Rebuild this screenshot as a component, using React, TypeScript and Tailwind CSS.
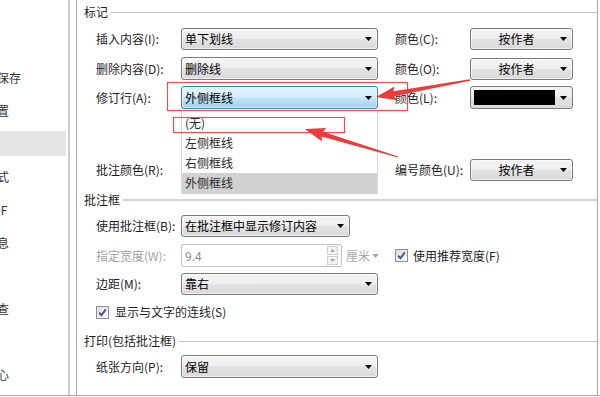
import React from "react";

const sideItems = [
  { label: "编辑" },
  { label: "常规与保存" },
  { label: "文件位置" },
  { label: "修订", active: true },
  { label: "中文版式" },
  { label: "输出PDF" },
  { label: "用户信息" },
  { label: "打印" },
  { label: "拼写检查" },
  { label: "安全性" },
  { label: "信任中心" },
];

function Caret({ color = "#000" }: { color?: string }) {
  return (
    <svg width="7" height="4" viewBox="0 0 7 4" className="shrink-0">
      <path d="M0 0H7L3.5 4Z" fill={color} />
    </svg>
  );
}

function Select({ text, className = "", active = false }: { text: string; className?: string; active?: boolean }) {
  return (
    <div
      className={`h-[22px] flex items-center rounded-[3px] border pl-[3px] pr-[5px] shadow-[inset_0_0_0_1px_rgba(255,255,255,0.6)] ${
        active
          ? "border-[#3c7fb1] bg-[linear-gradient(#e6f4fc,#d6eefb_45%,#bde3f7_55%,#a3d4f0)]"
          : "border-[#7a7a7a] bg-[linear-gradient(#f4f4f4,#eeeeee_50%,#e3e3e3_50%,#d9d9d9)]"
      } ${className}`}
    >
      <span className="flex-1 text-[12px] leading-none text-black whitespace-nowrap">{text}</span>
      <Caret />
    </div>
  );
}

function AuthorButton() {
  return (
    <div className="w-[103px] h-[22px] flex items-center rounded-[3px] border border-[#7a7a7a] bg-[linear-gradient(#f4f4f4,#eeeeee_50%,#e3e3e3_50%,#d9d9d9)] shadow-[inset_0_0_0_1px_rgba(255,255,255,0.6)] pr-[5px]">
      <span className="flex-1 text-center text-[12px] leading-none text-black pl-[2px]">按作者</span>
      <Caret />
    </div>
  );
}

function Check() {
  return (
    <div className="w-[13px] h-[13px] border border-[#8e8f8f] bg-[linear-gradient(135deg,#dcdcdc,#fafafa)] flex items-center justify-center shrink-0">
      <svg width="11" height="11" viewBox="0 0 11 11">
        <path d="M2.2 5.6L4.4 8.2L8.8 2.4" fill="none" stroke="#3d4f8c" strokeWidth="1.8" />
      </svg>
    </div>
  );
}

function Heading({ text, line = "h-px bg-[#c3c3c3]" }: { text: string; line?: string }) {
  return (
    <div className="h-[24px] flex items-center pl-[7px]">
      <span className="text-[12px] leading-none text-[#1e1e1e] whitespace-nowrap">{text}</span>
      <div className={`flex-1 ml-[3px] ${line}`} />
    </div>
  );
}

function Label({ children, className = "w-[85px]", muted = false }: { children: React.ReactNode; className?: string; muted?: boolean }) {
  return (
    <span className={`${className} shrink-0 text-[12px] leading-none whitespace-nowrap ${muted ? "text-[#a3a3a3]" : "text-[#1e1e1e]"}`}>
      {children}
    </span>
  );
}

export default function App() {
  return (
    <div className="relative w-[600px] h-[397px] bg-white overflow-hidden font-['Noto_Sans_CJK_SC',sans-serif]">
      <div className="flex h-[395px]">
        {/* sidebar, scrolled so only the tail of each label shows */}
        <div className="w-[68px] shrink-0 pt-[28px] overflow-hidden">
          {sideItems.map((item, i) => (
            <div key={i} className="h-[33px] flex items-center">
              {item.active ? (
                <div className="w-[66px] h-[25px] bg-[#e4e4e4]" />
              ) : (
                <span className="-ml-[39px] text-[12px] leading-none text-[#333] whitespace-nowrap">{item.label}</span>
              )}
            </div>
          ))}
        </div>
        <div className="w-[2px] shrink-0 bg-[#cdcdcd]" />
        <div className="w-[6px] shrink-0" />

        {/* options panel */}
        <div className="w-[522px] shrink-0 border-l border-r border-[#a9a9a9] flex flex-col">
          <Heading text="标记" />
          <div className="mt-[4px] h-[22px] flex items-center pl-[19px]">
            <Label>插入内容(I):</Label>
            <Select className="w-[197px]" text="单下划线" />
            <Label className="w-[75px] ml-[17px]">颜色(C):</Label>
            <AuthorButton />
          </div>
          <div className="mt-[7px] h-[23px] flex items-center pl-[19px]">
            <Label>删除内容(D):</Label>
            <Select className="w-[197px] h-[23px]" text="删除线" />
            <Label className="w-[75px] ml-[17px]">颜色(O):</Label>
            <AuthorButton />
          </div>
          <div className="mt-[6px] h-[23px] flex items-center pl-[19px]">
            <Label>修订行(A):</Label>
            <Select className="w-[197px] h-[23px]" text="外侧框线" active />
            <Label className="w-[75px] ml-[17px]">颜色(L):</Label>
            <div className="w-[103px] h-[23px] flex items-center rounded-[3px] border border-[#7a7a7a] bg-[linear-gradient(#f4f4f4,#eeeeee_50%,#e3e3e3_50%,#d9d9d9)] pl-[3px] pr-[5px] gap-[5px]">
              <div className="w-[81px] h-[15px] bg-black" />
              <Caret />
            </div>
          </div>
          <div className="mt-[50px] h-[22px] flex items-center pl-[19px]">
            <Label>批注颜色(R):</Label>
            {/* its combo box sits under the open list */}
            <div className="w-[197px] h-[22px]" />
            <Label className="w-[75px] ml-[17px]">编号颜色(U):</Label>
            <AuthorButton />
          </div>

          <div className="mt-[7px]">
            <Heading text="批注框" line="h-[2px] bg-[#d2d2d2]" />
          </div>
          <div className="mt-[3px] h-[22px] flex items-center pl-[19px]">
            <Label>使用批注框(B):</Label>
            <Select className="w-[169px]" text="在批注框中显示修订内容" />
          </div>
          <div className="mt-[7px] h-[23px] flex items-center pl-[19px]">
            <Label muted>指定宽度(W):</Label>
            <div className="w-[161px] h-[23px] border border-[#c2c2c2] rounded-[2px] flex items-center pl-[3px] pr-[3px]">
              <span className="flex-1 text-[12px] leading-none text-[#8c8c8c]">9.4</span>
              <div className="w-[11px] h-[19px] flex flex-col gap-px">
                <div className="flex-1 border border-[#d0d0d0] bg-[#f3f3f3] flex items-center justify-center">
                  <svg width="5" height="3" viewBox="0 0 5 3"><path d="M0 3H5L2.5 0Z" fill="#a8a8a8" /></svg>
                </div>
                <div className="flex-1 border border-[#d0d0d0] bg-[#f3f3f3] flex items-center justify-center">
                  <svg width="5" height="3" viewBox="0 0 5 3"><path d="M0 0H5L2.5 3Z" fill="#a8a8a8" /></svg>
                </div>
              </div>
            </div>
            <span className="ml-[4px] text-[12px] leading-none text-[#a8a8a8] whitespace-nowrap">厘米</span>
            <span className="ml-[2px]"><Caret color="#a8a8a8" /></span>
            <div className="ml-[16px] flex items-center gap-[5px]">
              <Check />
              <Label className="">使用推荐宽度(F)</Label>
            </div>
          </div>
          <div className="mt-[6px] h-[22px] flex items-center pl-[19px]">
            <Label>边距(M):</Label>
            <Select className="w-[197px]" text="靠右" />
          </div>
          <div className="mt-[6px] h-[22px] flex items-center pl-[19px] gap-[6px]">
            <Check />
            <Label className="">显示与文字的连线(S)</Label>
          </div>

          <div className="mt-[6px]">
            <Heading text="打印(包括批注框)" />
          </div>
          <div className="mt-[2px] h-[23px] flex items-center pl-[19px]">
            <Label>纸张方向(P):</Label>
            <Select className="w-[197px] h-[23px]" text="保留" />
          </div>
        </div>
        <div className="flex-1" />
      </div>
      <div className="h-px bg-[#a9a9a9]" />

      {/* open dropdown list */}
      <div className="absolute left-[181px] top-[110px] w-[197px] h-[84px] bg-white border-l border-r border-b border-[#d6d6d6] pt-[3px]">
        {["(无)", "左侧框线", "右侧框线", "外侧框线"].map((t, i) => (
          <div
            key={t}
            className={`h-[20px] flex items-center pl-[3px] text-[12px] leading-none text-[#2a2a2a] ${i === 3 ? "bg-[#d1d1d1]" : ""}`}
          >
            {t}
          </div>
        ))}
      </div>

      {/* red annotations */}
      <svg className="absolute left-0 top-0 pointer-events-none" width="600" height="397" viewBox="0 0 600 397">
        <rect x="167.5" y="82.5" width="240" height="28" fill="none" stroke="#ee5050" strokeWidth="1.2" />
        <rect x="173.5" y="117.5" width="171" height="15" fill="none" stroke="#ee5050" strokeWidth="1.2" />
        <polygon
          points="469.9,79.3 393.3,91.3 394.5,86.5 376,97 396.9,100.3 394.1,96.3 470.1,80.7"
          fill="#f03a3a"
        />
        <polygon
          points="398.1,156.4 323,131.8 326.2,128 305,129 322.1,141.5 321.5,136.6 397.9,157.6"
          fill="#f03a3a"
        />
      </svg>
    </div>
  );
}
